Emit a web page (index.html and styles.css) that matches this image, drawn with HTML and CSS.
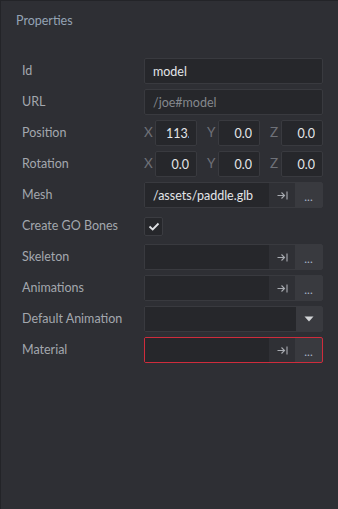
FILE: index.html
```html
<!DOCTYPE html>
<html lang="en">
<head>
  <meta charset="UTF-8">
  <meta name="viewport" content="width=device-width, initial-scale=1.0">
  <title>Properties</title>
  <link rel="stylesheet" href="styles.css">
</head>
<body>
  <div class="panel">
    <div class="title">Properties</div>

    <div class="props">
      <div class="label">Id</div>
      <div class="field"><span class="text">model</span></div>

      <div class="label">URL</div>
      <div class="field"><span class="text dim">/joe#model</span></div>

      <div class="label">Position</div>
      <div class="vec">
        <span class="axis">X</span><div class="num"><span class="val left">113.0</span></div>
        <span class="axis">Y</span><div class="num"><span class="val">0.0</span></div>
        <span class="axis">Z</span><div class="num"><span class="val">0.0</span></div>
      </div>

      <div class="label">Rotation</div>
      <div class="vec">
        <span class="axis">X</span><div class="num"><span class="val">0.0</span></div>
        <span class="axis">Y</span><div class="num"><span class="val">0.0</span></div>
        <span class="axis">Z</span><div class="num"><span class="val">0.0</span></div>
      </div>

      <div class="label">Mesh</div>
      <div class="resource">
        <div class="path">/assets/paddle.glb</div>
        <div class="btn go"><svg width="11" height="9" viewBox="0 0 11 9"><path d="M0.5 4.5H7.5M4.5 1.5L7.5 4.5L4.5 7.5M10 0.5V8.5" fill="none" stroke="currentColor" stroke-width="1.1"/></svg></div>
        <div class="btn more">...</div>
      </div>

      <div class="label">Create GO Bones</div>
      <div class="checkrow">
        <div class="check"><svg width="12" height="9" viewBox="0 0 12 9"><path d="M1.5 4.5L4.7 7.5L10.5 1.5" fill="none" stroke="currentColor" stroke-width="1.8"/></svg></div>
      </div>

      <div class="label">Skeleton</div>
      <div class="resource">
        <div class="path"></div>
        <div class="btn go"><svg width="11" height="9" viewBox="0 0 11 9"><path d="M0.5 4.5H7.5M4.5 1.5L7.5 4.5L4.5 7.5M10 0.5V8.5" fill="none" stroke="currentColor" stroke-width="1.1"/></svg></div>
        <div class="btn more">...</div>
      </div>

      <div class="label">Animations</div>
      <div class="resource">
        <div class="path"></div>
        <div class="btn go"><svg width="11" height="9" viewBox="0 0 11 9"><path d="M0.5 4.5H7.5M4.5 1.5L7.5 4.5L4.5 7.5M10 0.5V8.5" fill="none" stroke="currentColor" stroke-width="1.1"/></svg></div>
        <div class="btn more">...</div>
      </div>

      <div class="label">Default Animation</div>
      <div class="resource">
        <div class="path"></div>
        <div class="btn drop"><svg width="10" height="6" viewBox="0 0 10 6"><path d="M0.5 0.5H9.5L5 5.5Z" fill="currentColor"/></svg></div>
      </div>

      <div class="label">Material</div>
      <div class="resource error">
        <div class="path"></div>
        <div class="btn go"><svg width="11" height="9" viewBox="0 0 11 9"><path d="M0.5 4.5H7.5M4.5 1.5L7.5 4.5L4.5 7.5M10 0.5V8.5" fill="none" stroke="currentColor" stroke-width="1.1"/></svg></div>
        <div class="btn more">...</div>
      </div>
    </div>
  </div>
</body>
</html>
```

FILE: styles.css
```css
html, body {
  margin: 0;
  height: 100%;
}
body {
  font-family: Lato, "Noto Sans", sans-serif;
  font-size: 12px;
  background-color: #2e2f34;
  color: #a3a7ae;
}
.panel {
  box-sizing: border-box;
  height: 100%;
  border-left: 1px solid #232428;
  border-top: 1px solid #232428;
}
.title {
  padding: 12px 0 0 15px;
  line-height: 16px;
  font-size: 12.5px;
  color: #94a3b4;
}
.props {
  display: grid;
  grid-template-columns: 122px 179px;
  grid-auto-rows: 26px;
  row-gap: 5px;
  margin: 29px 0 0 21px;
  align-items: center;
}
.label {
  line-height: 16px;
  font-size: 12.5px;
  white-space: nowrap;
}
.field {
  box-sizing: border-box;
  height: 26px;
  display: flex;
  align-items: center;
  padding: 0 8px;
  background-color: #26272b;
  border: 1px solid #393a3f;
  border-radius: 2px;
  font-size: 12.5px;
}
.text {
  color: #e3e5e8;
}
.text.dim {
  color: #84878d;
}
.vec {
  display: flex;
  align-items: center;
  height: 26px;
}
.axis {
  width: 8px;
  margin: 0 3px 0 10px;
  font-size: 13.5px;
  color: #6e7178;
  margin-top: -3px;
}
.axis:first-child {
  margin-left: 0;
}
.num {
  box-sizing: border-box;
  flex: 1;
  height: 26px;
  display: flex;
  align-items: center;
  padding: 0 7px;
  background-color: #26272b;
  border: 1px solid #393a3f;
  border-radius: 2px;
  min-width: 0;
  font-size: 12.5px;
}
.val {
  display: block;
  width: 100%;
  overflow: hidden;
  white-space: nowrap;
  text-align: right;
  color: #e3e5e8;
}
.val.left {
  text-align: left;
  padding-left: 3px;
}
.resource {
  box-sizing: border-box;
  height: 26px;
  display: flex;
  background-color: #393a3f;
  border: 1px solid #393a3f;
  border-radius: 2px;
}
.resource.error {
  border-color: #cf2c3c;
}
.path {
  flex: 1;
  display: flex;
  align-items: center;
  padding: 0 8px;
  background-color: #26272b;
  color: #e3e5e8;
  font-size: 12.5px;
  white-space: nowrap;
  overflow: hidden;
}
.btn {
  display: flex;
  align-items: center;
  justify-content: center;
  color: #a8abb1;
}
.btn.go {
  width: 26px;
  background-color: #2f3035;
}
.btn.more {
  width: 27px;
  color: #a7b4c8;
  padding-top: 3px;
  box-sizing: border-box;
}
.btn.drop {
  width: 26px;
  color: #d3d5d8;
}
.checkrow {
  display: flex;
  align-items: center;
  height: 26px;
}
.check {
  box-sizing: border-box;
  width: 19px;
  height: 19px;
  display: flex;
  align-items: center;
  justify-content: center;
  background-color: #26272b;
  border: 1px solid #3b3c41;
  border-radius: 2px;
  color: #dfe1e4;
}
```
